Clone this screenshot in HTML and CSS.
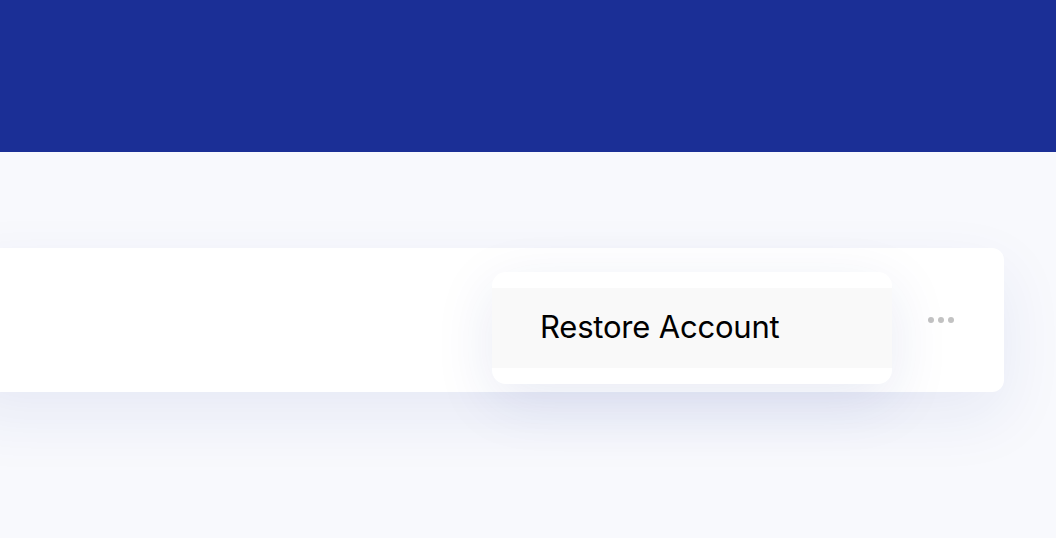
FILE: index.html
```html
<!DOCTYPE html>
<html lang="en">
<head>
  <meta charset="UTF-8" />
  <meta name="viewport" content="width=device-width, initial-scale=1.0" />
  <title>Accounts</title>
  <link rel="stylesheet" href="styles.css">
</head>
<body>
  <header class="top-bar"></header>
  <main class="content">
    <div class="account-row">
      <div class="account-info"></div>
      <button class="more-btn" aria-label="More">
        <span></span><span></span><span></span>
      </button>
      <ul class="row-menu">
        <li class="row-menu-item">Restore Account</li>
      </ul>
    </div>
  </main>
</body>
</html>
```

FILE: styles.css
```css
body {
  margin: 0;
  font-family: Inter, "Noto Sans", sans-serif;
  background: #f8f9fd;
  color: #000;
  height: 100vh;
  overflow: hidden;
}
.top-bar {
  height: 152px;
  background: #1b2f96;
}
.content {
  padding: 96px 52px 0 0;
}
.account-row {
  position: relative;
  display: flex;
  align-items: center;
  height: 144px;
  margin-left: -40px;
  background: #fff;
  border-radius: 12px;
  box-shadow: 0 24px 64px rgba(27, 47, 150, 0.08);
}
.account-info {
  flex: 1;
}
.more-btn {
  display: flex;
  gap: 4px;
  margin: -1px 50px 0 0;
  padding: 0;
  border: none;
  background: none;
}
.more-btn span {
  width: 6px;
  height: 6px;
  border-radius: 50%;
  background: #c2c2c2;
}
.row-menu {
  position: absolute;
  top: 24px;
  right: 112px;
  width: 400px;
  margin: 0;
  padding: 16px 0;
  list-style: none;
  background: #fff;
  border-radius: 14px;
  box-shadow: 0 16px 60px rgba(27, 47, 150, 0.1);
}
.row-menu-item {
  height: 80px;
  box-sizing: border-box;
  display: flex;
  align-items: center;
  padding: 0 0 4px 48px;
  background: #f9f9f9;
  font-size: 31px;
  letter-spacing: -0.2px;
}
```
